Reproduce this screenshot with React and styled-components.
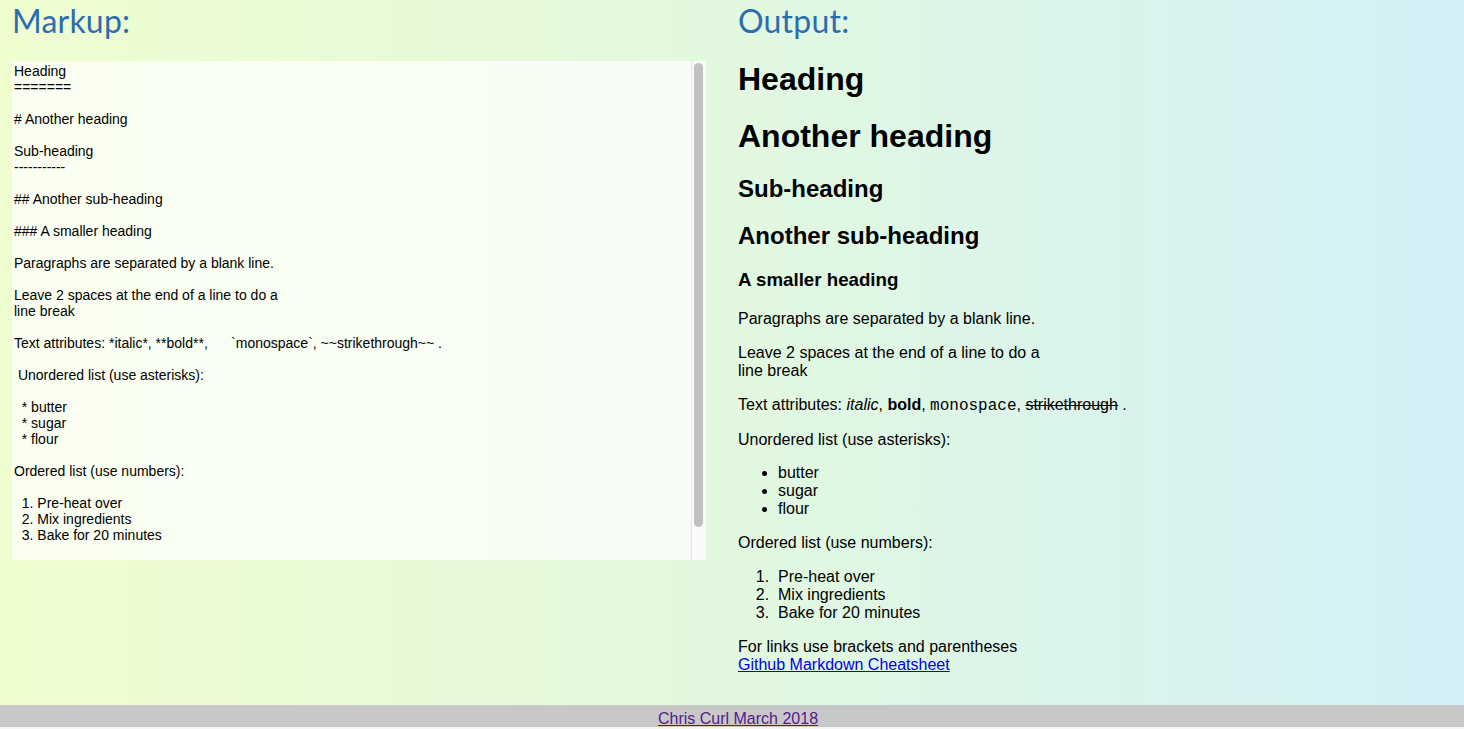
import React from "react";
import styled, { createGlobalStyle } from "styled-components";

const Global = createGlobalStyle`
  html, body { margin: 0; padding: 0; }
  body {
    font-family: "Liberation Sans", Arial, sans-serif;
    font-size: 16px;
    color: #000;
    background: #f4f6f4;
  }
`;

const Page = styled.div`
  display: flex;
  flex-direction: column;
  min-height: 727px;
`;

const Main = styled.main`
  flex: 1;
  display: grid;
  grid-template-columns: 732px 1fr;
  background: linear-gradient(to right, #effecf 0%, #e2f8df 50%, #d3f0f8 100%);
`;

const Column = styled.section`
  display: flex;
  flex-direction: column;
  align-items: flex-start;
  padding-left: ${(p) => p.$pad}px;
`;

const Title = styled.h2`
  margin: 0;
  height: 40px;
  line-height: 42px;
  font-family: "Lato", "Open Sans", sans-serif;
  font-weight: 400;
  font-size: 32px;
  letter-spacing: 0.2px;
  color: #2c6cb0;
`;

const EditorBox = styled.div`
  margin-top: 21px;
  width: 694px;
  height: 499px;
  display: flex;
  background: rgba(255, 255, 255, 0.7);
`;

const Editor = styled.textarea`
  flex: 1;
  min-width: 0;
  height: 100%;
  box-sizing: border-box;
  border: none;
  outline: none;
  resize: none;
  padding: 2px;
  background: transparent;
  font-family: "Liberation Sans", Arial, sans-serif;
  font-size: 14px;
  line-height: 16px;
  color: #000;
  overflow: hidden;
  white-space: pre-wrap;
`;

const ScrollTrack = styled.div`
  width: 14px;
  flex-shrink: 0;
  background: #fafafa;
  border-left: 1px solid #e6e6e6;
  box-sizing: content-box;
`;

const ScrollThumb = styled.div`
  width: 9px;
  margin: 2px 0 0 2px;
  border-radius: 5px;
  background: #c1c1c1;
`;

const Output = styled.div`
  padding-top: 1px;
`;

const H1 = styled.h1`
  font-size: 32px;
  line-height: 35px;
  margin: 21.44px 0;
`;
const H2 = styled.h2`
  font-size: 24px;
  line-height: 27px;
  margin: 19.92px 0;
`;
const H3 = styled.h3`
  font-size: 18.72px;
  line-height: 21px;
  margin: 18.72px 0 20px;
`;
const P = styled.p`
  margin: 16px 0 ${(p) => p.$mb ?? 16}px;
  line-height: 18px;
`;
const Code = styled.code`
  font-family: "Liberation Mono", "Courier New", monospace;
  font-size: 16px;
`;
const List = styled.ul`
  margin: 14px 0 16px;
  padding-left: 40px;
  line-height: 18px;
`;
const OList = styled.ol`
  margin: 16px 0;
  padding-left: 40px;
  line-height: 18px;
  & > li::marker {
    content: counter(list-item) ".  ";
  }
`;
const Link = styled.a`
  color: ${(p) => (p.$visited ? "#551a8b" : "#0000ee")};
  text-decoration: underline;
`;

const Footer = styled.footer`
  height: 22px;
  background: #c8c8c8;
  text-align: center;
  line-height: 27px;
  padding-left: 12px;
`;

const markdown = `Heading
=======

# Another heading

Sub-heading
-----------

## Another sub-heading

### A smaller heading

Paragraphs are separated by a blank line.

Leave 2 spaces at the end of a line to do a  
line break

Text attributes: *italic*, **bold**,      \`monospace\`, ~~strikethrough~~ .

 Unordered list (use asterisks):

  * butter
  * sugar
  * flour

Ordered list (use numbers):

  1. Pre-heat over
  2. Mix ingredients
  3. Bake for 20 minutes

For links use brackets and parentheses  
[Github Markdown Cheatsheet](https://github.com/adam-p/markdown-here/wiki/Markdown-Cheatsheet)`;

export default function App() {
  const thumbHeight = 464;
  return (
    <Page>
      <Global />
      <Main>
        <Column $pad={12}>
          <Title>Markup:</Title>
          <EditorBox>
            <Editor defaultValue={markdown} spellCheck={false} />
            <ScrollTrack>
              <ScrollThumb style={{ height: thumbHeight }} />
            </ScrollTrack>
          </EditorBox>
        </Column>
        <Column $pad={6}>
          <Title>Output:</Title>
          <Output>
            <H1>Heading</H1>
            <H1>Another heading</H1>
            <H2>Sub-heading</H2>
            <H2>Another sub-heading</H2>
            <H3>A smaller heading</H3>
            <P>Paragraphs are separated by a blank line.</P>
            <P>
              Leave 2 spaces at the end of a line to do a
              <br />
              line break
            </P>
            <P $mb={15}>
              Text attributes: <em>italic</em>, <strong>bold</strong>,{" "}
              <Code>monospace</Code>, <s>strikethrough</s> .
            </P>
            <P $mb={15}>Unordered list (use asterisks):</P>
            <List>
              <li>butter</li>
              <li>sugar</li>
              <li>flour</li>
            </List>
            <P>Ordered list (use numbers):</P>
            <OList>
              <li>Pre-heat over</li>
              <li>Mix ingredients</li>
              <li>Bake for 20 minutes</li>
            </OList>
            <P>
              For links use brackets and parentheses
              <br />
              <Link href="#">Github Markdown Cheatsheet</Link>
            </P>
          </Output>
        </Column>
      </Main>
      <Footer>
        <Link $visited href="#">
          Chris Curl March 2018
        </Link>
      </Footer>
    </Page>
  );
}
